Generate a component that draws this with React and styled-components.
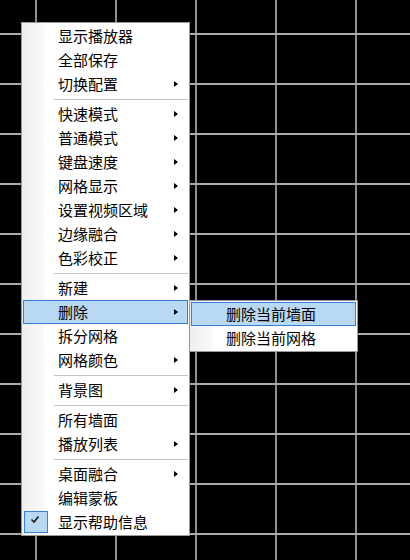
import styled, { createGlobalStyle } from "styled-components"

const GlobalStyle = createGlobalStyle`
  html, body {
    margin: 0;
    padding: 0;
    background: #000;
  }
  body {
    font-family: "Noto Sans CJK SC", "Noto Sans", sans-serif;
  }
`

const Canvas = styled.div`
  position: relative;
  width: 410px;
  height: 560px;
  overflow: hidden;
  background-color: #000;
  background-image:
    linear-gradient(to bottom, #ababab 0 2px, transparent 2px),
    linear-gradient(to right, #8e8e8e 0 2px, transparent 2px);
  background-size: 100% 50px, 80px 100%;
  background-position: 0 33px, 35px 0;
`

const Menu = styled.div`
  position: absolute;
  left: ${(p) => p.$left}px;
  top: ${(p) => p.$top}px;
  width: 169px;
  box-sizing: border-box;
  border: 1px solid #9a9a9a;
  padding: 1px;
  background: linear-gradient(to right, #efefef 0, #f6f6f6 18px, #fdfdfd 24px, #fff 26px);
  display: flex;
  flex-direction: column;
`

const Item = styled.div`
  height: 24px;
  box-sizing: border-box;
  display: flex;
  align-items: center;
  border: 1px solid ${(p) => (p.$active ? "#3283d6" : "transparent")};
  background: ${(p) => (p.$active ? "#b9d8f4" : "transparent")};
  color: #000;
  font-size: 15px;
  line-height: 22px;
  white-space: nowrap;
`

const Gutter = styled.span`
  width: 24px;
  height: 22px;
  flex: none;
  box-sizing: border-box;
  display: flex;
  align-items: center;
  justify-content: center;
  border: 1px solid ${(p) => (p.$checked ? "#3283d6" : "transparent")};
  background: ${(p) => (p.$checked ? "#b9d8f4" : "transparent")};
`

const Label = styled.span`
  margin-left: 10px;
`

const Arrow = styled.span`
  margin-left: auto;
  margin-right: 9px;
  width: 0;
  height: 0;
  border-top: 3.5px solid transparent;
  border-bottom: 3.5px solid transparent;
  border-left: 4px solid #000;
`

const Separator = styled.div`
  height: 6px;
  box-sizing: border-box;
  padding-top: 3px;
  margin-left: 31px;
  &::before {
    content: "";
    display: block;
    height: 1px;
    background: #c4c4c4;
  }
`

const Check = () => (
  <svg width="22" height="20" viewBox="0 0 22 20" style={{ display: "block" }}>
    <path d="M6.5 7.5 L9 10 L13.5 4.5" fill="none" stroke="#1a1a1a" strokeWidth="1.6" />
  </svg>
)

const mainItems = [
  { label: "显示播放器" },
  { label: "全部保存" },
  { label: "切换配置", sub: true },
  "sep",
  { label: "快速模式", sub: true },
  { label: "普通模式", sub: true },
  { label: "键盘速度", sub: true },
  { label: "网格显示", sub: true },
  { label: "设置视频区域", sub: true },
  { label: "边缘融合", sub: true },
  { label: "色彩校正", sub: true },
  "sep",
  { label: "新建", sub: true },
  { label: "删除", sub: true, active: true },
  { label: "拆分网格" },
  { label: "网格颜色", sub: true },
  "sep",
  { label: "背景图", sub: true },
  "sep",
  { label: "所有墙面" },
  { label: "播放列表", sub: true },
  "sep",
  { label: "桌面融合", sub: true },
  { label: "编辑蒙板" },
  { label: "显示帮助信息", checked: true },
]

const subItems = [
  { label: "删除当前墙面", active: true },
  { label: "删除当前网格" },
]

const MenuList = ({ items, left, top }) => (
  <Menu $left={left} $top={top}>
    {items.map((it, i) =>
      it === "sep" ? (
        <Separator key={i} />
      ) : (
        <Item key={i} $active={it.active}>
          <Gutter $checked={it.checked}>{it.checked && <Check />}</Gutter>
          <Label>{it.label}</Label>
          {it.sub && <Arrow />}
        </Item>
      )
    )}
  </Menu>
)

export default function App() {
  return (
    <>
      <GlobalStyle />
      <Canvas>
        <MenuList items={mainItems} left={21} top={22} />
        <MenuList items={subItems} left={189} top={300} />
      </Canvas>
    </>
  )
}
